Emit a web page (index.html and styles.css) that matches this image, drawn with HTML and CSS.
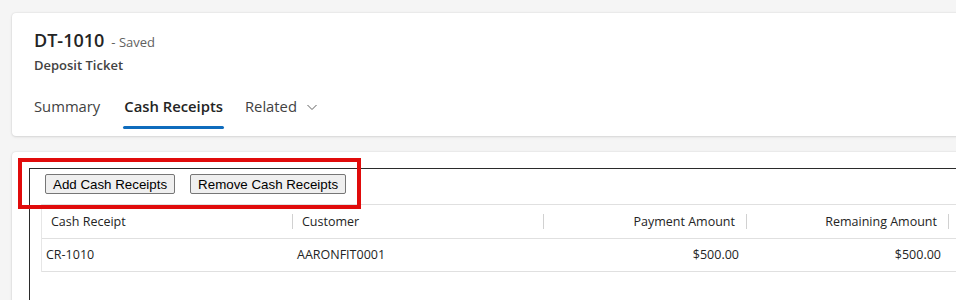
FILE: index.html
```html
<!DOCTYPE html>
<html>
  <head>
    <title>DT-1010 - Deposit Ticket</title>
    <meta charset="utf-8">
    <link rel="stylesheet" href="styles.css">
  </head>
  <body>
  <div id="page">
    <div class="card header-card">
      <div class="title-line">
        <span class="record-name">DT-1010</span>
        <span class="record-status">- Saved</span>
      </div>
      <div class="entity-name">Deposit Ticket</div>
      <div class="tabs">
        <div class="tab">Summary</div>
        <div class="tab tab-active">Cash Receipts</div>
        <div class="tab">Related
          <svg class="chevron" width="12" height="12" viewBox="0 0 12 12">
            <path d="M1.5 4 L6 8.5 L10.5 4" fill="none" stroke="#616161" stroke-width="1"/>
          </svg>
        </div>
      </div>
    </div>

    <div class="card content-card">
      <div class="subgrid-frame">
        <div class="toolbar">
          <button type="button" class="cmd-btn">Add Cash Receipts</button>
          <button type="button" class="cmd-btn">Remove Cash Receipts</button>
          <div class="highlight"></div>
        </div>
        <div class="grid">
          <div class="grid-row grid-head">
            <div class="cell">Cash Receipt</div>
            <div class="cell">Customer</div>
            <div class="cell num">Payment Amount</div>
            <div class="cell num">Remaining Amount</div>
            <div class="cell"></div>
          </div>
          <div class="grid-row grid-data">
            <div class="cell">CR-1010</div>
            <div class="cell">AARONFIT0001</div>
            <div class="cell num">$500.00</div>
            <div class="cell num">$500.00</div>
            <div class="cell"></div>
          </div>
        </div>
      </div>
    </div>
  </div>
  </body>
</html>
```

FILE: styles.css
```css
body{
  margin: 0;
  background: #f5f5f5;
  font-family: "Open Sans", "Noto Sans", sans-serif;
  color: #242424;
  overflow: hidden;
}

#page{
  width: 1010px;
  padding: 13px 0 0 12px;
  display: flex;
  flex-direction: column;
  gap: 16px;
}

.card{
  background: #ffffff;
  border-radius: 4px;
  box-shadow: 0 0 2px rgba(0,0,0,0.12), 0 1px 3px rgba(0,0,0,0.10);
}

/* header card */
.header-card{
  height: 123px;
  padding: 0 0 0 22px;
  box-sizing: border-box;
  overflow: hidden;
}

.title-line{
  display: flex;
  align-items: baseline;
  gap: 7px;
  padding-top: 15px;
  height: 28px;
}

.record-name{
  font-size: 18px;
  font-weight: 600;
  color: #242424;
}

.record-status{
  font-size: 13px;
  color: #616161;
}

.entity-name{
  font-size: 13px;
  font-weight: 600;
  color: #424242;
}

.tabs{
  display: flex;
  gap: 22px;
  margin-top: 20px;
}

.tab{
  font-size: 14.8px;
  color: #424242;
  height: 39px;
  line-height: 24px;
  display: flex;
  align-items: flex-start;
  gap: 9px;
  position: relative;
}

.tab-active{
  font-weight: 600;
  color: #242424;
  margin-left: 2px;
}

.tab-active::after{
  content: "";
  position: absolute;
  left: -1px;
  right: -1px;
  bottom: 4px;
  height: 3px;
  border-radius: 2px;
  background: #0f6cbd;
}

.chevron{
  margin-top: 7px;
}

/* content card */
.content-card{
  height: 200px;
  padding: 16px 0 0 17px;
  box-sizing: border-box;
}

.subgrid-frame{
  border-top: 1px solid #2b2b2b;
  border-left: 1px solid #2b2b2b;
  height: 100%;
}

.toolbar{
  position: relative;
  display: flex;
  gap: 15px;
  padding: 5px 0 10px 15px;
}

.cmd-btn{
  font-family: "Liberation Sans", Arial, sans-serif;
  font-size: 13.33px;
  height: 20px;
  padding: 0 7px;
  background: #efefef;
  color: #000000;
  border: 1px solid #767676;
  border-radius: 2px;
}

.highlight{
  position: absolute;
  left: -12px;
  top: -11px;
  width: 343px;
  height: 51px;
  box-sizing: border-box;
  border: 4px solid #e00b0b;
}

.grid{
  margin-left: 11px;
  border-left: 1px solid #e6e6e6;
  border-top: 1px solid #e0e0e0;
  font-size: 12.5px;
}

.grid-row{
  display: grid;
  grid-template-columns: 251px 251px 203px 202px 1fr;
  border-bottom: 1px solid #e0e0e0;
  height: 32px;
  align-items: center;
}

.grid-head{
  height: 33px;
  color: #242424;
}

.grid-head .cell{
  padding: 0 12px 0 9px;
  position: relative;
  line-height: 33px;
}

.grid-head .cell::after{
  content: "";
  position: absolute;
  right: 0;
  top: 9px;
  width: 1px;
  height: 15px;
  background: #d1d1d1;
}

.grid-data .cell{
  padding: 0 8px 0 4px;
  line-height: 32px;
}

.cell.num{
  text-align: right;
}
```
